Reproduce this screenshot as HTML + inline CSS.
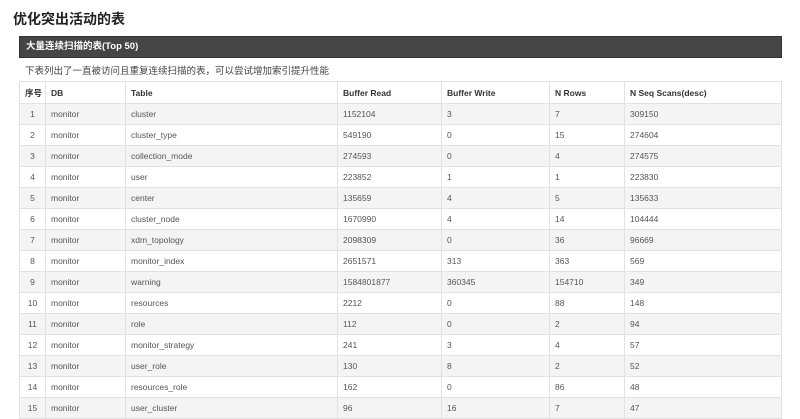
<!DOCTYPE html>
<html><head><meta charset="utf-8"><style>
body{margin:0;width:800px;height:416px;overflow:hidden;background:#fff;font-family:"Liberation Sans","Noto Sans CJK SC",sans-serif;color:#333}
h1{position:absolute;left:13px;top:9px;margin:0;font-size:14px;font-weight:bold;color:#222}
.bar{position:absolute;left:19px;top:36px;width:763px;height:22px;background:#454545;border:1px solid #333;box-sizing:border-box;color:#fff;font-size:9.5px;font-weight:bold;line-height:20px;padding-left:6px}
.sub{position:absolute;left:25px;top:63px;font-size:9.5px;color:#444}
table{position:absolute;left:19px;top:81px;width:763px;border-collapse:collapse;font-size:8.5px;table-layout:fixed}
td,th{border:1px solid #e2e2e2;padding:0 5px;height:20px;text-align:left;white-space:nowrap;color:#555}
th{height:21px;font-weight:bold;color:#333}
tr:nth-child(even) td{background:#f4f4f4}
td:first-child{text-align:center}
</style></head><body>
<h1>优化突出活动的表</h1>
<div class="bar">大量连续扫描的表(Top 50)</div>
<div class="sub">下表列出了一直被访问且重复连续扫描的表，可以尝试增加索引提升性能</div>
<table>
<colgroup><col style="width:26px"><col style="width:80px"><col style="width:212px"><col style="width:104px"><col style="width:108px"><col style="width:75px"><col></colgroup>
<tr><th>序号</th><th>DB</th><th>Table</th><th>Buffer Read</th><th>Buffer Write</th><th>N Rows</th><th>N Seq Scans(desc)</th></tr>
<tr><td>1</td><td>monitor</td><td>cluster</td><td>1152104</td><td>3</td><td>7</td><td>309150</td></tr>
<tr><td>2</td><td>monitor</td><td>cluster_type</td><td>549190</td><td>0</td><td>15</td><td>274604</td></tr>
<tr><td>3</td><td>monitor</td><td>collection_mode</td><td>274593</td><td>0</td><td>4</td><td>274575</td></tr>
<tr><td>4</td><td>monitor</td><td>user</td><td>223852</td><td>1</td><td>1</td><td>223830</td></tr>
<tr><td>5</td><td>monitor</td><td>center</td><td>135659</td><td>4</td><td>5</td><td>135633</td></tr>
<tr><td>6</td><td>monitor</td><td>cluster_node</td><td>1670990</td><td>4</td><td>14</td><td>104444</td></tr>
<tr><td>7</td><td>monitor</td><td>xdm_topology</td><td>2098309</td><td>0</td><td>36</td><td>96669</td></tr>
<tr><td>8</td><td>monitor</td><td>monitor_index</td><td>2651571</td><td>313</td><td>363</td><td>569</td></tr>
<tr><td>9</td><td>monitor</td><td>warning</td><td>1584801877</td><td>360345</td><td>154710</td><td>349</td></tr>
<tr><td>10</td><td>monitor</td><td>resources</td><td>2212</td><td>0</td><td>88</td><td>148</td></tr>
<tr><td>11</td><td>monitor</td><td>role</td><td>112</td><td>0</td><td>2</td><td>94</td></tr>
<tr><td>12</td><td>monitor</td><td>monitor_strategy</td><td>241</td><td>3</td><td>4</td><td>57</td></tr>
<tr><td>13</td><td>monitor</td><td>user_role</td><td>130</td><td>8</td><td>2</td><td>52</td></tr>
<tr><td>14</td><td>monitor</td><td>resources_role</td><td>162</td><td>0</td><td>86</td><td>48</td></tr>
<tr><td>15</td><td>monitor</td><td>user_cluster</td><td>96</td><td>16</td><td>7</td><td>47</td></tr>
</table>
</body></html>
